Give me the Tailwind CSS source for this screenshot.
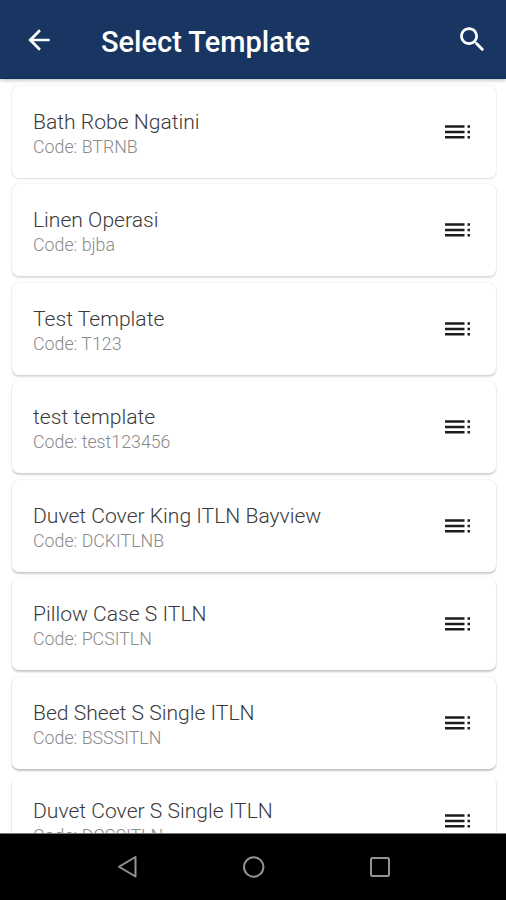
<!DOCTYPE html>
<html lang="en">
<head>
<meta charset="utf-8">
<title>Select Template</title>
<script src="https://cdn.jsdelivr.net/npm/@tailwindcss/browser@4"></script>
</head>
<body class="bg-white">
<div class="relative flex h-[900px] w-[506px] flex-col overflow-hidden bg-white font-['Roboto',sans-serif]">
  <header class="z-10 flex h-[79px] shrink-0 items-center border-b-2 border-[#123061] bg-[#193561] pl-[23px] pr-[17px] pt-[2px] shadow-[0_1px_4px_rgba(0,0,0,0.3)]">
    <svg class="size-[32px] shrink-0" viewBox="0 0 24 24" fill="#fff"><path d="M20 11H7.83l5.59-5.59L12 4l-8 8 8 8 1.41-1.41L7.83 13H20v-2z"/></svg>
    <h1 class="ml-[46px] mt-[4px] grow whitespace-nowrap text-[29px] font-medium leading-8 text-white">Select Template</h1>
    <svg class="size-[33px] shrink-0" viewBox="0 0 24 24" fill="#fff"><path d="M15.5 14h-.79l-.28-.27C15.41 12.59 16 11.11 16 9.500 16 5.910 13.090 3 9.500 3S3 5.910 3 9.500 5.910 16 9.500 16c1.610 0 3.090-.59 4.230-1.570l.27.28v.79l5 4.990L20.490 19l-4.990-5zm-6 0C7.010 14 5 11.990 5 9.500S7.010 5 9.500 5 14 7.010 14 9.500 11.990 14 9.500 14z"/></svg>
  </header>
  <main id="list" class="flex min-h-0 grow flex-col gap-[6.43px] overflow-hidden pl-[12px] pr-[10.500px] pt-[7px]"></main>
  <nav class="z-10 flex h-[67px] shrink-0 items-center justify-center gap-[102px] border-t border-[#777] bg-black pl-[2px]">
    <svg class="size-6" viewBox="0 0 24 24" fill="none" stroke="#949494" stroke-width="2" stroke-linejoin="round"><path d="M19.500 2V21.500L3 11.750z"/></svg>
    <svg class="size-6" viewBox="0 0 24 24" fill="none" stroke="#949494" stroke-width="2"><circle cx="11.700" cy="12" r="9.700"/></svg>
    <svg class="size-6" viewBox="0 0 24 24" fill="none" stroke="#949494" stroke-width="2"><rect x="3" y="3" width="18" height="18" rx="1.500"/></svg>
  </nav>
</div>
<template id="row">
  <section class="flex h-[92px] shrink-0 items-center justify-between rounded-[7px] bg-white pl-[21px] pr-[23.500px]">
    <div class="whitespace-nowrap pt-[3px] font-light">
      <h2 class="text-[21.100px] leading-[27px] text-[#3a3a3a]"></h2>
      <p class="text-[17.800px] leading-[24px] text-[#8a8a8a]"></p>
    </div>
    <svg class="h-[16px] w-[28px] shrink-0" viewBox="0 0 28 16" fill="#1c1c1c"><path d="M1 1.300h19.500v2.500H1zM1 6.700h19.500v2.500H1zM1 12.100h19.500v2.500H1zM23.500 1.300H26v2.500h-2.500zM23.500 6.700H26v2.500h-2.500zM23.500 12.100H26v2.500h-2.500z"/></svg>
  </section>
</template>
<script>
  const rows = [
    ['Bath Robe Ngatini', 'BTRNB'],
    ['Linen Operasi', 'bjba'],
    ['Test Template', 'T123'],
    ['test template', 'test123456'],
    ['Duvet Cover King ITLN Bayview', 'DCKITLNB'],
    ['Pillow Case S ITLN', 'PCSITLN'],
    ['Bed Sheet S Single ITLN', 'BSSSITLN'],
    ['Duvet Cover S Single ITLN', 'DCSSITLN']
  ];
  rows.forEach(([name, code], i) => {
    const node = document.getElementById('row').content.cloneNode(true);
    node.querySelector('h2').textContent = name;
    node.querySelector('p').textContent = 'Code: ' + code;
    // The elevation shadow grows toward the bottom of the screen.
    node.querySelector('section').style.boxShadow =
      `0 ${1 + i * 0.15}px 2px rgba(0,0,0,${0.1 + i * 0.022}), 0 0 2px rgba(0,0,0,${0.13 - i * 0.01})`;
    document.getElementById('list').append(node);
  });
</script>
</body>
</html>
